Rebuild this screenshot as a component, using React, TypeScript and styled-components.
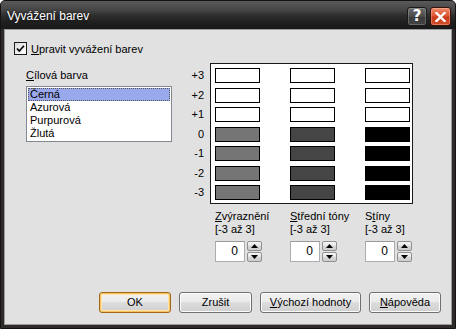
import React, { useState } from 'react';
import styled, { createGlobalStyle } from 'styled-components';

const GlobalStyle = createGlobalStyle`
    html, body {
        margin: 0;
        padding: 0;
        background: #ffffff;
    }
    body {
        font-family: "Liberation Sans", Arial, sans-serif;
        font-size: 11px;
        color: #000;
    }
`;

const LEVELS = ['+3', '+2', '+1', '0', '-1', '-2', '-3'];
const COLORS = ['Černá', 'Azurová', 'Purpurová', 'Žlutá'];
// fill of each column for levels at and below zero
const DARK = ['#757575', '#454545', '#000000'];

const CONTROLS = [
    { first: 'Z', rest: 'výraznění', pre: '' },
    { first: 'S', rest: 'třední tóny', pre: '' },
    { first: 't', rest: 'íny', pre: 'S' },
];

const App: React.FC = () => {
    const [checked, setChecked] = useState<boolean>(true);
    const [selected, setSelected] = useState<number>(0);

    return (
        <>
            <GlobalStyle />
            <Window>
                <TitleBar>
                    <Title>Vyvážení barev</Title>
                    <Caption>
                        <HelpButton>?</HelpButton>
                        <CloseButton>
                            <svg width="11" height="10" viewBox="0 0 11 10">
                                <path d="M1.5 1 L9.5 9 M9.5 1 L1.5 9" stroke="#fff" strokeWidth="2.4" strokeLinecap="square" />
                            </svg>
                        </CloseButton>
                    </Caption>
                </TitleBar>
                <Client>
                    <CheckRow onClick={() => setChecked(!checked)}>
                        <CheckBox>
                            {checked && (
                                <svg width="9" height="9" viewBox="0 0 9 9">
                                    <path d="M1 4.5 L3.3 7 L8 1.8" fill="none" stroke="#000" strokeWidth="1.7" />
                                </svg>
                            )}
                        </CheckBox>
                        <span><U>U</U>pravit vyvážení barev</span>
                    </CheckRow>
                    <Main>
                        <LeftColumn>
                            <FieldLabel><U>C</U>ílová barva</FieldLabel>
                            <ListBox>
                                {COLORS.map((name, i) => (
                                    <ListItem key={name} active={i === selected} onClick={() => setSelected(i)}>
                                        {name}
                                    </ListItem>
                                ))}
                            </ListBox>
                        </LeftColumn>
                        <Scale>
                            {LEVELS.map(level => (
                                <ScaleLabel key={level}>{level}</ScaleLabel>
                            ))}
                        </Scale>
                        <RightColumn>
                            <Panel>
                                {LEVELS.map((level, row) =>
                                    DARK.map((dark, col) => (
                                        <Swatch key={level + col} fill={row < 3 ? '#ffffff' : dark} />
                                    ))
                                )}
                            </Panel>
                            <Controls>
                                {CONTROLS.map(c => (
                                    <Control key={c.rest}>
                                        <ControlLabel>
                                            {c.pre}<U>{c.first}</U>{c.rest}
                                            <br />
                                            [-3 až 3]
                                        </ControlLabel>
                                        <Spinner>
                                            <SpinInput>0</SpinInput>
                                            <SpinButtons>
                                                <SpinButton>
                                                    <svg width="7" height="4" viewBox="0 0 7 4"><path d="M0 4 L3.5 0 L7 4 Z" fill="#000" /></svg>
                                                </SpinButton>
                                                <SpinButton>
                                                    <svg width="7" height="4" viewBox="0 0 7 4"><path d="M0 0 L3.5 4 L7 0 Z" fill="#000" /></svg>
                                                </SpinButton>
                                            </SpinButtons>
                                        </Spinner>
                                    </Control>
                                ))}
                            </Controls>
                        </RightColumn>
                    </Main>
                    <ButtonRow>
                        <Button primary width={72}>OK</Button>
                        <Button width={73}>Zrušit</Button>
                        <Button width={101}><U>V</U>ýchozí hodnoty</Button>
                        <Button width={72}><U>N</U>ápověda</Button>
                    </ButtonRow>
                </Client>
            </Window>
        </>
    );
};

const Window = styled.div`
    width: 456px;
    height: 329px;
    box-sizing: border-box;
    display: flex;
    flex-direction: column;
    background: #2e2a2a;
    border: 1px solid #151212;
    border-radius: 5px 5px 0 0;
    overflow: hidden;
`;

const TitleBar = styled.div`
    height: 28px;
    flex: none;
    display: flex;
    align-items: center;
    justify-content: space-between;
    padding: 0 4px 0 6px;
    background: linear-gradient(#5a5a5a 0%, #434343 35%, #2f2f2f 50%, #202020 75%, #181818 100%);
`;

const Title = styled.div`
    color: #fff;
    font-size: 12px;
    padding-top: 2px;
    text-shadow: 0 0 3px rgba(0, 0, 0, 0.8);
`;

const Caption = styled.div`
    display: flex;
    gap: 3px;
    padding-top: 3px;
`;

const HelpButton = styled.div`
    width: 20px;
    height: 19px;
    box-sizing: border-box;
    border: 1px solid #1a1a1a;
    border-radius: 3px;
    background: linear-gradient(#6c6c6c, #4a4a4a 50%, #3a3a3a 51%, #444);
    box-shadow: inset 0 0 0 1px rgba(255, 255, 255, 0.2);
    color: #fff;
    font-family: "DejaVu Sans", sans-serif;
    font-weight: bold;
    font-size: 15px;
    line-height: 17px;
    text-align: center;
`;

const CloseButton = styled.div`
    width: 21px;
    height: 19px;
    box-sizing: border-box;
    border: 1px solid #3a1208;
    border-radius: 3px;
    background: linear-gradient(#ef8b6c, #de5734 45%, #c93c1c 55%, #d24e2a);
    box-shadow: inset 0 0 0 1px rgba(255, 210, 190, 0.35);
    display: flex;
    align-items: center;
    justify-content: center;
`;

const Client = styled.div`
    flex: 1;
    margin: 0 3px 3px;
    display: flex;
    flex-direction: column;
    background: #e1e1e1;
    border: 1px solid #9c9c9c;
`;

const U = styled.span`
    text-decoration: underline;
`;

const CheckRow = styled.div`
    display: flex;
    align-items: center;
    gap: 4px;
    margin: 12px 0 0 9px;
    height: 13px;
    cursor: default;
`;

const CheckBox = styled.div`
    width: 13px;
    height: 13px;
    box-sizing: border-box;
    border: 1px solid #1c1c1c;
    background: linear-gradient(135deg, #dcdcdc, #ffffff);
    display: flex;
    align-items: center;
    justify-content: center;
`;

const Main = styled.div`
    display: flex;
    margin-top: 8px;
    padding-left: 21px;
`;

const LeftColumn = styled.div`
    width: 146px;
    padding-top: 6px;
    display: flex;
    flex-direction: column;
    gap: 4px;
`;

const FieldLabel = styled.div`
    line-height: 13px;
    height: 13px;
`;

const ListBox = styled.div`
    height: 56px;
    box-sizing: border-box;
    border: 1px solid #828790;
    background: #fff;
    padding: 1px;
`;

const ListItem = styled.div<{ active?: boolean }>`
    height: 13px;
    line-height: 13px;
    padding-left: 2px;
    box-sizing: border-box;
    background: ${p => (p.active ? '#9aa9ec' : 'transparent')};
    outline: ${p => (p.active ? '1px dotted #555' : 'none')};
    outline-offset: -1px;
    cursor: default;
`;

const Scale = styled.div`
    width: 32px;
    padding-top: 5px;
    display: grid;
    grid-auto-rows: 15px;
    row-gap: 4.5px;
    align-content: start;
`;

const ScaleLabel = styled.div`
    text-align: right;
    line-height: 15px;
`;

const RightColumn = styled.div`
    margin-left: 6px;
    display: flex;
    flex-direction: column;
`;

const Panel = styled.div`
    width: 203px;
    height: 141px;
    box-sizing: border-box;
    border: 1px solid #1a1a1a;
    background: #fff;
    padding: 4px 0 0 4px;
    display: grid;
    grid-template-columns: repeat(3, 45px);
    grid-auto-rows: 15px;
    column-gap: 30px;
    row-gap: 4.5px;
    align-content: start;
`;

const Swatch = styled.div<{ fill: string }>`
    box-sizing: border-box;
    border: 1px solid #000;
    background: ${p => p.fill};
`;

const Controls = styled.div`
    display: grid;
    grid-template-columns: repeat(3, 75px);
    padding: 6px 0 0 5px;
`;

const Control = styled.div`
    display: flex;
    flex-direction: column;
    gap: 5px;
`;

const ControlLabel = styled.div`
    line-height: 13px;
    white-space: nowrap;
`;

const Spinner = styled.div`
    display: flex;
    gap: 2px;
`;

const SpinInput = styled.div`
    width: 30px;
    height: 21px;
    box-sizing: border-box;
    border: 1px solid #abadb3;
    border-top-color: #9a9a9a;
    background: #fff;
    text-align: right;
    padding-right: 6px;
    line-height: 19px;
    font-size: 12px;
`;

const SpinButtons = styled.div`
    display: flex;
    flex-direction: column;
    gap: 1px;
`;

const SpinButton = styled.div`
    width: 15px;
    height: 10px;
    box-sizing: border-box;
    border: 1px solid #8e8f8f;
    border-radius: 2px;
    background: linear-gradient(#f6f6f6, #e4e4e4 50%, #d4d4d4 51%, #cfcfcf);
    display: flex;
    align-items: center;
    justify-content: center;
`;

const ButtonRow = styled.div`
    margin-top: auto;
    display: flex;
    justify-content: flex-end;
    gap: 8px;
    padding: 0 10px 11px 0;
`;

const Button = styled.div<{ primary?: boolean; width: number }>`
    width: ${p => p.width}px;
    height: 21px;
    box-sizing: border-box;
    border: 1px solid ${p => (p.primary ? '#a06818' : '#707070')};
    border-radius: 3px;
    background: linear-gradient(#f2f2f2 0%, #ebebeb 45%, #dddddd 50%, #cfcfcf 100%);
    box-shadow: ${p => (p.primary ? 'inset 0 0 0 1px #f7c35c, inset 0 0 0 2px #ffe3a8' : 'inset 0 0 0 1px #fcfcfc')};
    display: flex;
    align-items: center;
    justify-content: center;
    line-height: 13px;
    cursor: default;
`;

export default App;
